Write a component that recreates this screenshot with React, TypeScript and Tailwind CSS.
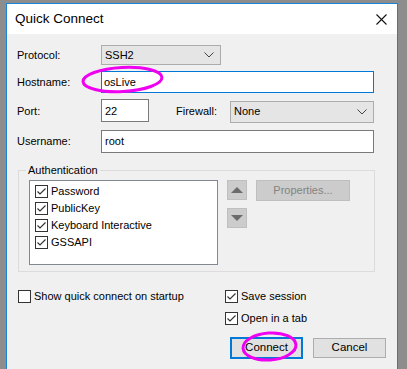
import React from "react";

const font = { fontFamily: '"Liberation Sans", Arial, sans-serif' };

function Check({ checked, className = "" }: { checked: boolean; className?: string }) {
  return (
    <svg width="13" height="13" viewBox="0 0 13 13" className={className}>
      <rect x="0.5" y="0.5" width="12" height="12" fill="#fff" stroke="#333" />
      {checked && <path d="M2.5 6.5 L5 9 L10.5 3.5" fill="none" stroke="#333" strokeWidth="1.2" />}
    </svg>
  );
}

function Chevron() {
  return (
    <svg width="10" height="6" viewBox="0 0 10 6">
      <path d="M0.5 0.5 L5 5 L9.5 0.5" fill="none" stroke="#444" strokeWidth="1" />
    </svg>
  );
}

export default function App() {
  return (
    <div className="relative w-[407px] h-[369px] overflow-hidden bg-[#8d8d8d] pt-[3px] pl-[6px] text-[11px] text-black" style={font}>
      <div className="w-[392px] h-[380px] border-x border-t border-[#1883d7] bg-[#f0f0f0]">
        {/* title bar */}
        <div className="h-[30px] bg-white flex items-center justify-between pl-[8px] pr-[10px]">
          <span className="text-[13.5px] text-black">Quick Connect</span>
          <svg width="11" height="11" viewBox="0 0 11 11">
            <path d="M0.5 0.5 L10.5 10.5 M10.5 0.5 L0.5 10.5" stroke="#111" strokeWidth="1.1" />
          </svg>
        </div>
        <div className="pl-[10px] pt-[11px]">
          {/* Protocol */}
          <div className="flex items-center h-[20px]">
            <div className="w-[84px]">Protocol:</div>
            <div className="w-[120px] h-[20px] bg-[#e5e5e5] border border-[#acacac] flex items-center justify-between pl-[3px] pr-[6px]">
              <span>SSH2</span>
              <Chevron />
            </div>
          </div>
          {/* Hostname */}
          <div className="flex items-center h-[22px] mt-[6px]">
            <div className="w-[84px]">Hostname:</div>
            <div className="w-[273px] h-[22px] bg-white border border-[#0078d7] flex items-center pl-[2px]">osLive</div>
          </div>
          {/* Port */}
          <div className="flex items-center h-[23px] mt-[6px]">
            <div className="w-[84px] pt-[2px]">Port:</div>
            <div className="w-[48px] h-[23px] bg-white border border-[#7a7a7a] pl-[3px] pt-[3px]">22</div>
            <div className="ml-[27px] w-[54px] pt-[2px]">Firewall:</div>
            <div className="w-[144px] h-[22px] bg-[#e5e5e5] border border-[#acacac] flex items-center justify-between pl-[3px] pr-[6px] mt-[2px]">
              <span>None</span>
              <Chevron />
            </div>
          </div>
          {/* Username */}
          <div className="flex items-center h-[23px] mt-[8px]">
            <div className="w-[84px]">Username:</div>
            <div className="w-[273px] h-[23px] bg-white border border-[#7a7a7a] flex items-center pl-[3px] pb-[1px]">root</div>
          </div>
          {/* Authentication group */}
          <div className="relative ml-[1px] mt-[17px] w-[357px] h-[102px] border border-[#dcdcdc] pt-[9px] pl-[10px]">
            <span className="absolute left-[7px] top-[-8px] bg-[#f0f0f0] px-[2px] leading-[14px]">Authentication</span>
            <div className="flex">
              <div className="w-[189px] h-[85px] bg-white border border-[#828790] pl-[5px] pt-[4px] flex flex-col gap-[4px]">
                {["Password", "PublicKey", "Keyboard Interactive", "GSSAPI"].map((t) => (
                  <div key={t} className="flex items-center gap-[3px] h-[13px]">
                    <Check checked />
                    <span>{t}</span>
                  </div>
                ))}
              </div>
              <div className="ml-[9px] flex flex-col gap-[8px]">
                <div className="w-[20px] h-[20px] bg-[#cccccc] border border-[#bfbfbf] flex items-center justify-center">
                  <svg width="12" height="6" viewBox="0 0 12 6"><path d="M0 6 L6 0 L12 6 Z" fill="#6b6b6b" /></svg>
                </div>
                <div className="w-[20px] h-[20px] bg-[#cccccc] border border-[#bfbfbf] flex items-center justify-center">
                  <svg width="12" height="6" viewBox="0 0 12 6"><path d="M0 0 L12 0 L6 6 Z" fill="#6b6b6b" /></svg>
                </div>
              </div>
              <div className="ml-[9px] w-[94px] h-[21px] bg-[#cccccc] border border-[#bfbfbf] flex items-center justify-center text-[#838383]">
                Properties...
              </div>
            </div>
          </div>
          {/* bottom options */}
          <div className="flex mt-[18px]">
            <div className="w-[207px] flex items-center gap-[3px] h-[13px] ml-[1px]">
              <Check checked={false} />
              <span>Show quick connect on startup</span>
            </div>
            <div className="flex flex-col gap-[9px]">
              <div className="flex items-center gap-[3px] h-[13px]">
                <Check checked />
                <span>Save session</span>
              </div>
              <div className="flex items-center gap-[3px] h-[13px]">
                <Check checked />
                <span>Open in a tab</span>
              </div>
            </div>
          </div>
          <div className="flex mt-[12px] ml-[213px] gap-[10px] items-center">
            <div className="w-[73px] h-[22px] bg-[#e1e1e1] border-2 border-[#0078d7] flex items-center justify-center text-[11.5px]">Connect</div>
            <div className="w-[73px] h-[20px] bg-[#e1e1e1] border border-[#adadad] flex items-center justify-center text-[11.5px]">Cancel</div>
          </div>
        </div>
      </div>
      {/* annotation ellipses */}
      <svg className="absolute left-0 top-0 pointer-events-none" width="407" height="369">
        <ellipse cx="122.5" cy="79.5" rx="39.5" ry="12" fill="none" stroke="#f000f0" strokeWidth="3" transform="rotate(-3 122.5 79.5)" />
        <ellipse cx="269.5" cy="346.5" rx="26.5" ry="13.5" fill="none" stroke="#f000f0" strokeWidth="3" transform="rotate(-4 269.5 346.5)" />
      </svg>
    </div>
  );
}
